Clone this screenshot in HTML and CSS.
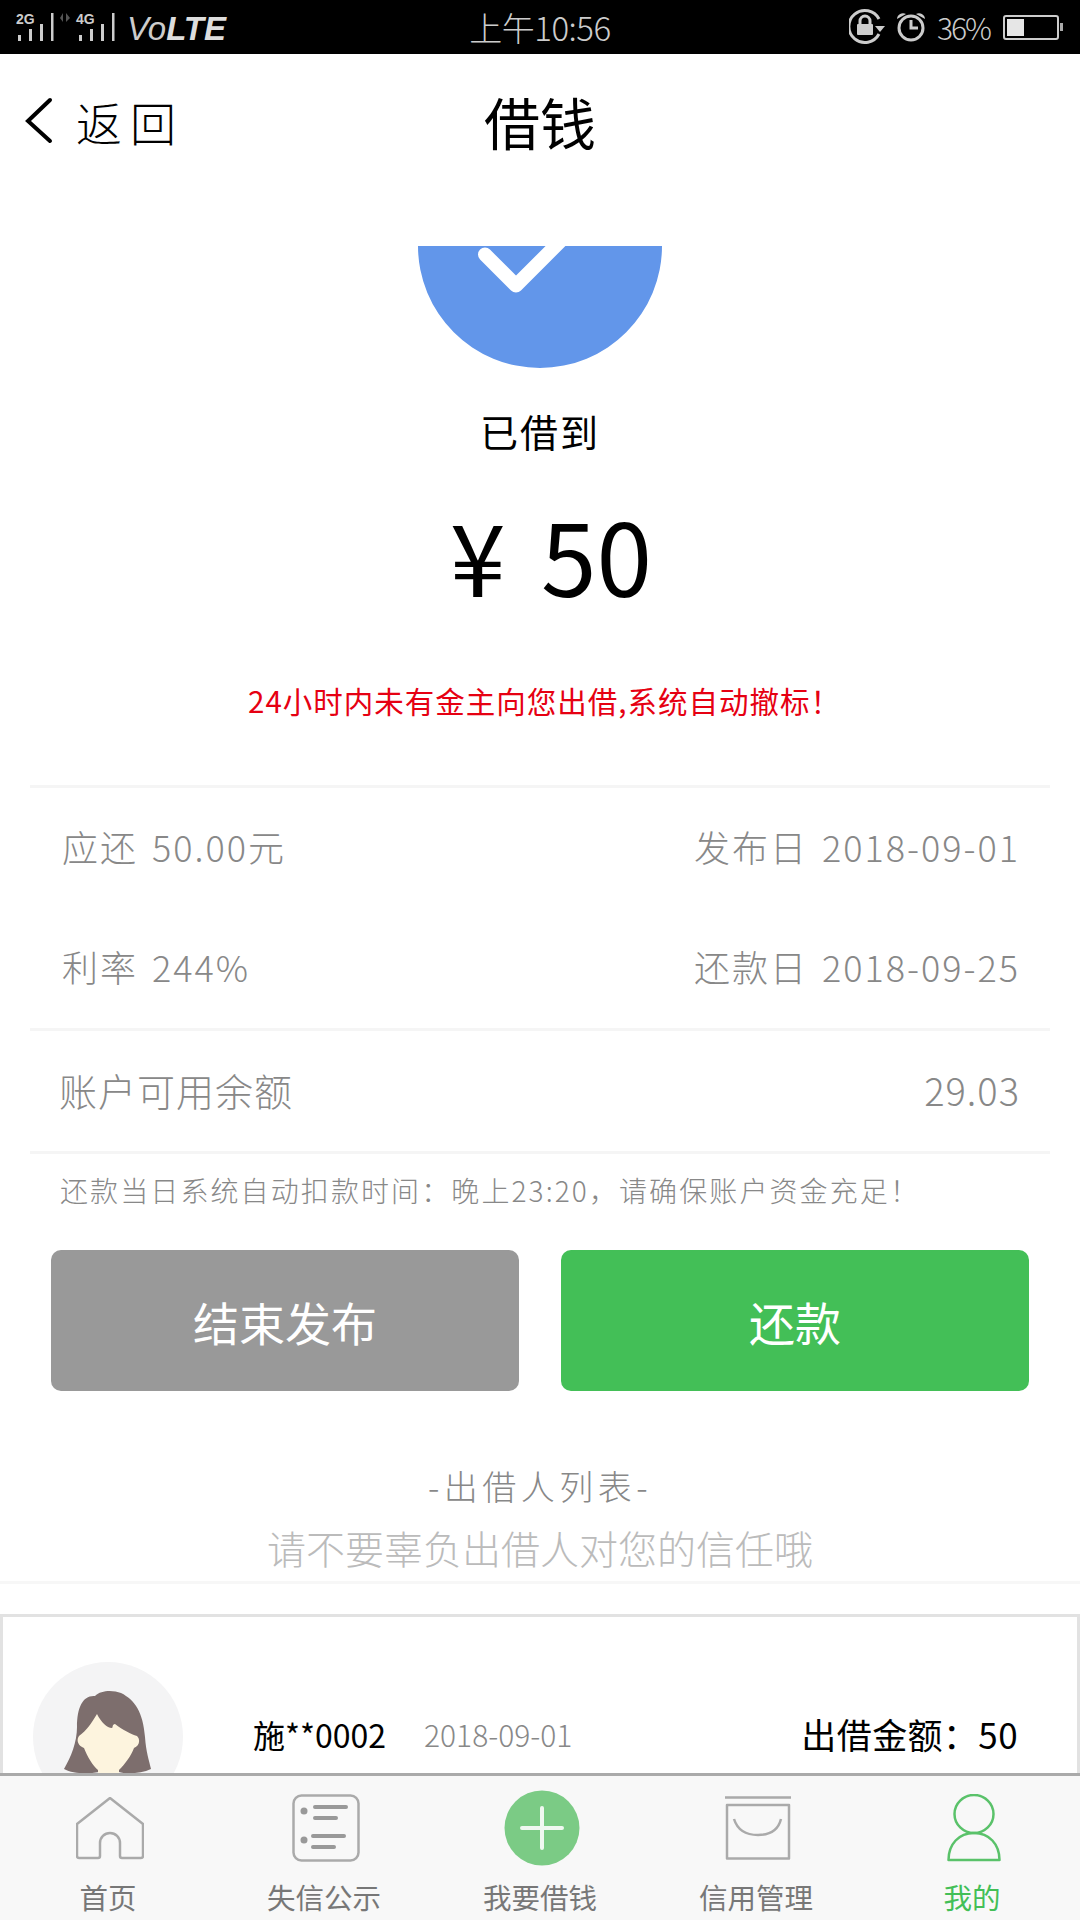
FILE: index.html
```html
<!DOCTYPE html>
<html lang="zh">
<head>
<meta charset="utf-8">
<title>借钱</title>
<link rel="stylesheet" href="styles.css">
</head>
<body>
<div class="page">
  <div class="statusbar">
    <div class="sb-left">
      <svg class="sb-signal" width="120" height="54" viewBox="0 0 120 54">
        <text x="16" y="24" class="sb-net">2G</text>
        <rect x="18" y="35" width="3" height="6" /><rect x="29" y="29" width="3" height="12" /><rect x="40" y="24" width="3" height="17" /><rect x="51" y="13" width="2.5" height="28" />
        <path class="sb-dim" d="M63 13v9l-3-4zM66 22v-9l4 5z" />
        <text x="76" y="24" class="sb-net">4G</text>
        <rect x="79" y="35" width="3" height="6" /><rect x="90" y="29" width="3" height="12" /><rect x="101" y="24" width="3" height="17" /><rect x="112" y="13" width="2.5" height="28" />
      </svg>
      <span class="volte">Vo<b>LTE</b></span>
    </div>
    <div class="sb-time">上午10:56</div>
    <div class="sb-right">
      <svg width="38" height="54" viewBox="0 0 38 54" class="sb-icon">
        <path class="sb-line" d="M30 34A16 16 0 1 1 30 19" />
        <rect class="sb-fill" x="8" y="24" width="16" height="11" rx="1" />
        <path class="sb-line" d="M11 24v-3a5 5 0 0 1 10 0v3" />
        <path class="sb-fill" d="M26 26h10l-5 6z" />
      </svg>
      <svg width="32" height="54" viewBox="0 0 32 54" class="sb-icon">
        <circle class="sb-line" cx="16" cy="28" r="12" />
        <path class="sb-line" d="M16 20v8h7" />
        <path class="sb-fill" d="M2 19a6 6 0 0 1 9-5zM30 19a6 6 0 0 0-9-5z" />
      </svg>
      <span class="sb-pct">36%</span>
      <div class="battery"><div class="battery-level"></div></div>
      <div class="battery-nub"></div>
    </div>
  </div>

  <header class="topbar">
    <div class="back">
      <svg width="32" height="48" viewBox="0 0 32 48"><path d="M28 3 6 24l22 20" /></svg>
      <span>返回</span>
    </div>
    <h1>借钱</h1>
  </header>

  <section class="hero">
    <div class="hero-icon">
      <svg width="244" height="122" viewBox="0 0 244 122">
        <path class="disc" d="M0 0H244A122 122 0 0 1 0 0Z" />
        <path class="tick" d="M67 8.500 98 39.500 150 -12.500" />
      </svg>
    </div>
    <div class="hero-state">已借到</div>
    <div class="hero-amount">¥ 50</div>
    <p class="hero-warning">24小时内未有金主向您出借,系统自动撤标！</p>
  </section>

  <section class="info">
    <div class="info-group">
      <div class="info-row"><span>应还 50.00元</span><span>发布日 2018-09-01</span></div>
      <div class="info-row"><span>利率 244%</span><span>还款日 2018-09-25</span></div>
    </div>
    <div class="info-group">
      <div class="info-row balance"><span>账户可用余额</span><span>29.03</span></div>
    </div>
    <p class="info-note">还款当日系统自动扣款时间：晚上23:20，请确保账户资金充足！</p>
  </section>

  <div class="actions">
    <button class="btn btn-grey">结束发布</button>
    <button class="btn btn-green">还款</button>
  </div>

  <section class="lenders">
    <div class="lenders-title">-出借人列表-</div>
    <div class="lenders-sub">请不要辜负出借人对您的信任哦</div>
  </section>

  <article class="card">
    <svg class="avatar" width="150" height="150" viewBox="0 0 150 150">
      <circle cx="75" cy="75" r="75" fill="#f4f4f5" />
      <path fill="#7d6e6d" d="M31 107C38 95 44 80 44 65 44 45 50 33 62 34 68 28 80 28 88 31 102 38 110 50 112 75 113 90 116 98 118 107 108 112 92 112 86 110L66 110C55 112 40 112 31 107Z" />
      <path fill="#fdf4de" d="M64 52C58 62 54 68 46 74 43 78 45 84 51 86 54 94 60 104 65 108V130H86V108C92 102 98 94 101 86 106 84 108 78 104 74 98 72 90 68 82 62 79 62 80 66 79 66 74 66 68 60 64 52Z" />
    </svg>
    <span class="lender-name">施**0002</span>
    <span class="lender-date">2018-09-01</span>
    <span class="lender-amount">出借金额：50</span>
  </article>

  <nav class="tabbar">
    <div class="tab">
      <div class="tab-icon">
        <svg width="68" height="63" viewBox="0 0 68 63"><path class="ic" d="M34 1 67 27V59Q67 61 65 61H46Q44 61 44 59V46A10 10 0 0 0 24 46V59Q24 61 22 61H3Q1 61 1 59V27Z" /></svg>
      </div>
      <span class="tab-label">首页</span>
    </div>
    <div class="tab">
      <div class="tab-icon">
        <svg width="68" height="68" viewBox="0 0 68 68">
          <rect class="ic" x="1.500" y="1.500" width="65" height="65" rx="8" />
          <circle class="ic-dot" cx="12" cy="17" r="3.500" /><circle class="ic-dot" cx="12" cy="46" r="3.500" />
          <path class="ic-bars" d="M23 13H54M23 24H44M21 42H52M21 53H42" />
        </svg>
      </div>
      <span class="tab-label">失信公示</span>
    </div>
    <div class="tab">
      <div class="tab-icon">
        <svg width="76" height="76" viewBox="0 0 76 76">
          <circle cx="38" cy="38" r="37.500" fill="#7bcb85" />
          <path class="ic-plus" d="M38 18V58M18 38H58" />
        </svg>
      </div>
      <span class="tab-label">我要借钱</span>
    </div>
    <div class="tab">
      <div class="tab-icon">
        <svg width="66" height="64" viewBox="0 0 66 64">
          <path class="ic" d="M0 1.500H66" />
          <path class="ic" d="M2 9H64V62.500H2Z" />
          <path class="ic" d="M9 23Q14 39 33 39 52 39 56 23" />
        </svg>
      </div>
      <span class="tab-label">信用管理</span>
    </div>
    <div class="tab tab-active">
      <div class="tab-icon">
        <svg width="54" height="68" viewBox="0 0 54 68">
          <ellipse class="ic-green" cx="27" cy="20" rx="19.500" ry="19" />
          <path class="ic-green" d="M1.500 66C1.500 50 12 39 27 39 42 39 52.500 50 52.500 66Z" />
        </svg>
      </div>
      <span class="tab-label">我的</span>
    </div>
  </nav>
</div>
</body>
</html>
```
FILE: styles.css
```css
* { box-sizing: border-box; }
html, body { margin: 0; padding: 0; }
body { background: #fff; font-family: "Noto Sans CJK SC", "Noto Sans", sans-serif; font-weight: 300; color: #000; }
.page { position: relative; width: 1080px; height: 1920px; overflow: hidden; background: #fff; }

.statusbar { height: 54px; background: #000; color: #ccc; display: grid; grid-template-columns: 1fr auto 1fr; align-items: center; }
.sb-left { display: flex; align-items: center; height: 54px; }
.sb-signal { display: block; flex: none; }
.sb-signal rect { fill: #ccc; }
.sb-net { font-family: "Liberation Sans", sans-serif; font-weight: 700; font-size: 14px; fill: #ccc; }
.sb-dim { fill: #555; }
.volte { font-family: "Liberation Sans", sans-serif; font-style: italic; font-weight: 400; font-size: 33px; line-height: 54px; margin-left: 7px; position: relative; top: 2px; }
.volte b { font-weight: 700; color: #ddd; }
.sb-time { font-size: 33px; line-height: 54px; letter-spacing: -.5px; }
.sb-right { display: flex; align-items: center; justify-content: flex-end; height: 54px; padding-right: 17px; }
.sb-icon { display: block; flex: none; margin-right: 8px; }
.sb-line { fill: none; stroke: #ccc; stroke-width: 3; }
.sb-fill { fill: #ccc; }
.sb-pct { font-size: 30px; line-height: 54px; margin-left: 2px; width: 66px; letter-spacing: -2px; }
.battery { width: 56px; height: 25px; border: 2px solid #ccc; border-radius: 3px; padding: 2px; margin-top: 1px; }
.battery-level { width: 17px; height: 100%; background: #e6e6e6; }
.battery-nub { width: 3px; height: 8px; background: #aaa; margin-left: 1px; }

.topbar { position: relative; height: 138px; display: flex; align-items: center; justify-content: center; }
.topbar h1 { margin: 0; font-size: 56px; font-weight: 400; line-height: 60px; position: relative; top: -2px; }
.back { position: absolute; left: 22px; top: 39px; display: flex; align-items: center; gap: 22px; font-size: 46px; line-height: 56px; letter-spacing: 8px; }
.back svg { display: block; }
.back path { fill: none; stroke: #000; stroke-width: 4; stroke-linecap: round; stroke-linejoin: miter; }

.hero { display: flex; flex-direction: column; align-items: center; }
.hero-icon { margin-top: 54px; height: 122px; }
.hero-icon svg { display: block; overflow: hidden; }
.disc { fill: #6296ea; }
.tick { fill: none; stroke: #fff; stroke-width: 14px; stroke-linejoin: round; stroke-linecap: round; }
.hero-state { margin-top: 33px; font-size: 38px; font-weight: 400; line-height: 60px; letter-spacing: 2px; }
.hero-amount { margin-top: 28px; padding-left: 22px; font-size: 100px; line-height: 130px; font-weight: 400; word-spacing: 13px; }
.hero-warning { margin: 61px 0 0; padding-left: 9px; color: #e60012; font-size: 29.500px; font-weight: 400; line-height: 40px; letter-spacing: 1px; }

.info { margin: 65px 30px 0; }
.info-group { border-top: 3px solid #f5f5f5; }
.info-row { height: 120px; padding: 0 30px 4px 32px; display: flex; align-items: center; justify-content: space-between; font-size: 36px; color: #888; letter-spacing: 2px; word-spacing: 4px; }
.balance { font-size: 38px; letter-spacing: 1px; padding-left: 29px; }
.info-note { margin: 0; border-top: 3px solid #f5f5f5; padding: 0 30px 2px; height: 76px; display: flex; align-items: center; font-size: 28px; color: #888; letter-spacing: 2.100px; white-space: nowrap; }

.actions { display: grid; grid-template-columns: 1fr 1fr; gap: 42px; margin: 23px 51px 0; }
.btn { height: 141px; border: 0; border-radius: 10px; color: #fff; font-family: inherit; font-size: 46px; font-weight: 400; letter-spacing: 0; }
.btn-grey { background: #999; }
.btn-green { background: #43bf57; }

.lenders { margin-top: 70px; padding-bottom: 5px; text-align: center; border-bottom: 3px solid #f7f7f7; }
.lenders-title { font-size: 34px; line-height: 50px; color: #888; letter-spacing: 4.500px; }
.lenders-sub { margin-top: 7px; font-size: 39px; line-height: 58px; color: #bbb; }

.card { margin-top: 30px; height: 240px; border: 3px solid #e2e2e2; border-bottom: 0; padding: 45px 0 0 30px; display: flex; align-items: flex-start; }
.avatar { display: block; flex: none; }
.lender-name { margin: 45px 0 0 70px; font-size: 32px; line-height: 54px; font-weight: 400; width: 171px; white-space: nowrap; }
.lender-date { margin-top: 45px; font-size: 30px; line-height: 54px; color: #888; }
.lender-amount { margin: 45px 59px 0 auto; font-size: 35px; line-height: 54px; font-weight: 400; letter-spacing: .4px; }

.tabbar { position: absolute; left: 0; right: 0; bottom: 0; height: 147px; background: #f8f8f8; border-top: 3px solid #aaa; display: grid; grid-template-columns: repeat(5, 1fr); }
.tab { display: flex; flex-direction: column; align-items: center; }
.tab-icon { height: 104px; padding-left: 3px; display: flex; align-items: center; justify-content: center; }
.tab-icon svg { display: block; }
.tab-label { font-size: 28.500px; line-height: 34px; color: #777; font-weight: 400; }
.tab-active .tab-label { color: #43bf57; }
.ic { fill: none; stroke: #aaa; stroke-width: 2.500; stroke-linejoin: round; }
.ic-dot { fill: #999; }
.ic-bars { fill: none; stroke: #999; stroke-width: 4; stroke-linecap: round; }
.ic-plus { fill: none; stroke: #f0f8f1; stroke-width: 4; stroke-linecap: round; }
.ic-green { fill: none; stroke: #5ac26a; stroke-width: 2.500; stroke-linejoin: round; }
```
